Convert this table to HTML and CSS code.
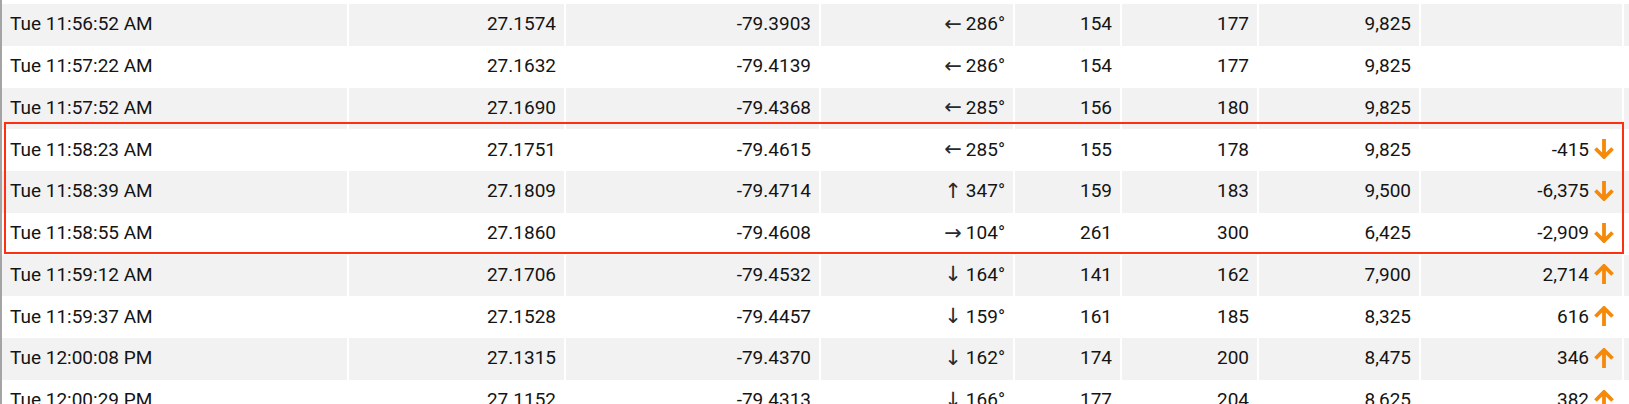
FILE: index.html
```html
<!DOCTYPE html>
<html>
<head>
<meta charset="utf-8">
<link rel="stylesheet" href="styles.css">
</head>
<body>
<div class="table">
  <div class="row shade">
    <div class="cell">Tue 11:56:52 AM</div><div class="cell num">27.1574</div><div class="cell num">-79.3903</div><div class="cell num"><span class="dir">←</span> 286°</div><div class="cell num">154</div><div class="cell num">177</div><div class="cell num">9,825</div><div class="cell num"></div><div class="cell"></div>
  </div>
  <div class="row">
    <div class="cell">Tue 11:57:22 AM</div><div class="cell num">27.1632</div><div class="cell num">-79.4139</div><div class="cell num"><span class="dir">←</span> 286°</div><div class="cell num">154</div><div class="cell num">177</div><div class="cell num">9,825</div><div class="cell num"></div><div class="cell"></div>
  </div>
  <div class="row shade">
    <div class="cell">Tue 11:57:52 AM</div><div class="cell num">27.1690</div><div class="cell num">-79.4368</div><div class="cell num"><span class="dir">←</span> 285°</div><div class="cell num">156</div><div class="cell num">180</div><div class="cell num">9,825</div><div class="cell num"></div><div class="cell"></div>
  </div>
  <div class="row">
    <div class="cell">Tue 11:58:23 AM</div><div class="cell num">27.1751</div><div class="cell num">-79.4615</div><div class="cell num"><span class="dir">←</span> 285°</div><div class="cell num">155</div><div class="cell num">178</div><div class="cell num">9,825</div><div class="cell num">-415<svg class="trend" viewBox="0 0 20 20"><path d="M10 0V17M1.5 9.5L10 18L18.5 9.5"/></svg></div><div class="cell"></div>
  </div>
  <div class="row shade">
    <div class="cell">Tue 11:58:39 AM</div><div class="cell num">27.1809</div><div class="cell num">-79.4714</div><div class="cell num"><span class="dir">↑</span> 347°</div><div class="cell num">159</div><div class="cell num">183</div><div class="cell num">9,500</div><div class="cell num">-6,375<svg class="trend" viewBox="0 0 20 20"><path d="M10 0V17M1.5 9.5L10 18L18.5 9.5"/></svg></div><div class="cell"></div>
  </div>
  <div class="row">
    <div class="cell">Tue 11:58:55 AM</div><div class="cell num">27.1860</div><div class="cell num">-79.4608</div><div class="cell num"><span class="dir">→</span> 104°</div><div class="cell num">261</div><div class="cell num">300</div><div class="cell num">6,425</div><div class="cell num">-2,909<svg class="trend" viewBox="0 0 20 20"><path d="M10 0V17M1.5 9.5L10 18L18.5 9.5"/></svg></div><div class="cell"></div>
  </div>
  <div class="row shade">
    <div class="cell">Tue 11:59:12 AM</div><div class="cell num">27.1706</div><div class="cell num">-79.4532</div><div class="cell num"><span class="dir">↓</span> 164°</div><div class="cell num">141</div><div class="cell num">162</div><div class="cell num">7,900</div><div class="cell num">2,714<svg class="trend" viewBox="0 0 20 20"><path d="M10 20V3M1.5 10.5L10 2L18.5 10.5"/></svg></div><div class="cell"></div>
  </div>
  <div class="row">
    <div class="cell">Tue 11:59:37 AM</div><div class="cell num">27.1528</div><div class="cell num">-79.4457</div><div class="cell num"><span class="dir">↓</span> 159°</div><div class="cell num">161</div><div class="cell num">185</div><div class="cell num">8,325</div><div class="cell num">616<svg class="trend" viewBox="0 0 20 20"><path d="M10 20V3M1.5 10.5L10 2L18.5 10.5"/></svg></div><div class="cell"></div>
  </div>
  <div class="row shade">
    <div class="cell">Tue 12:00:08 PM</div><div class="cell num">27.1315</div><div class="cell num">-79.4370</div><div class="cell num"><span class="dir">↓</span> 162°</div><div class="cell num">174</div><div class="cell num">200</div><div class="cell num">8,475</div><div class="cell num">346<svg class="trend" viewBox="0 0 20 20"><path d="M10 20V3M1.5 10.5L10 2L18.5 10.5"/></svg></div><div class="cell"></div>
  </div>
  <div class="row">
    <div class="cell">Tue 12:00:29 PM</div><div class="cell num">27.1152</div><div class="cell num">-79.4313</div><div class="cell num"><span class="dir">↓</span> 166°</div><div class="cell num">177</div><div class="cell num">204</div><div class="cell num">8,625</div><div class="cell num">382<svg class="trend" viewBox="0 0 20 20"><path d="M10 20V3M1.5 10.5L10 2L18.5 10.5"/></svg></div><div class="cell"></div>
  </div>
  <div class="highlight"></div>
</div>
</body>
</html>
```

FILE: styles.css
```css
html, body {
  margin: 0;
  padding: 0;
  background: #ffffff;
  overflow: hidden;
}

body {
  font-family: Roboto, "DejaVu Sans", sans-serif;
  font-size: 19px;
  color: #141414;
}

.table {
  position: relative;
  border-left: 2px solid #a4a4a4;
  padding-top: 4px;
  min-height: 400px;
}

.row {
  display: grid;
  grid-template-columns: 345px 215px 253px 192px 105px 135px 160px 201px 1fr;
  column-gap: 2px;
  height: 41.75px;
}

.cell {
  display: flex;
  align-items: center;
  padding: 0 8px 2px;
  white-space: nowrap;
  overflow: hidden;
}

.shade .cell {
  background: #f2f2f2;
}

.num {
  justify-content: flex-end;
}

.dir {
  font-family: "DejaVu Sans", sans-serif;
  font-size: 21px;
  margin-right: 4px;
  color: #2a2a2a;
}

.trend {
  width: 20px;
  height: 20px;
  margin-left: 5px;
  flex: none;
  align-self: center;
}

.trend path {
  fill: none;
  stroke: #f5890a;
  stroke-width: 3.8;
}

.highlight {
  position: absolute;
  top: 122px;
  left: 2px;
  width: 1616px;
  height: 128px;
  border: 2px solid #ff2f0f;
  pointer-events: none;
}
```
